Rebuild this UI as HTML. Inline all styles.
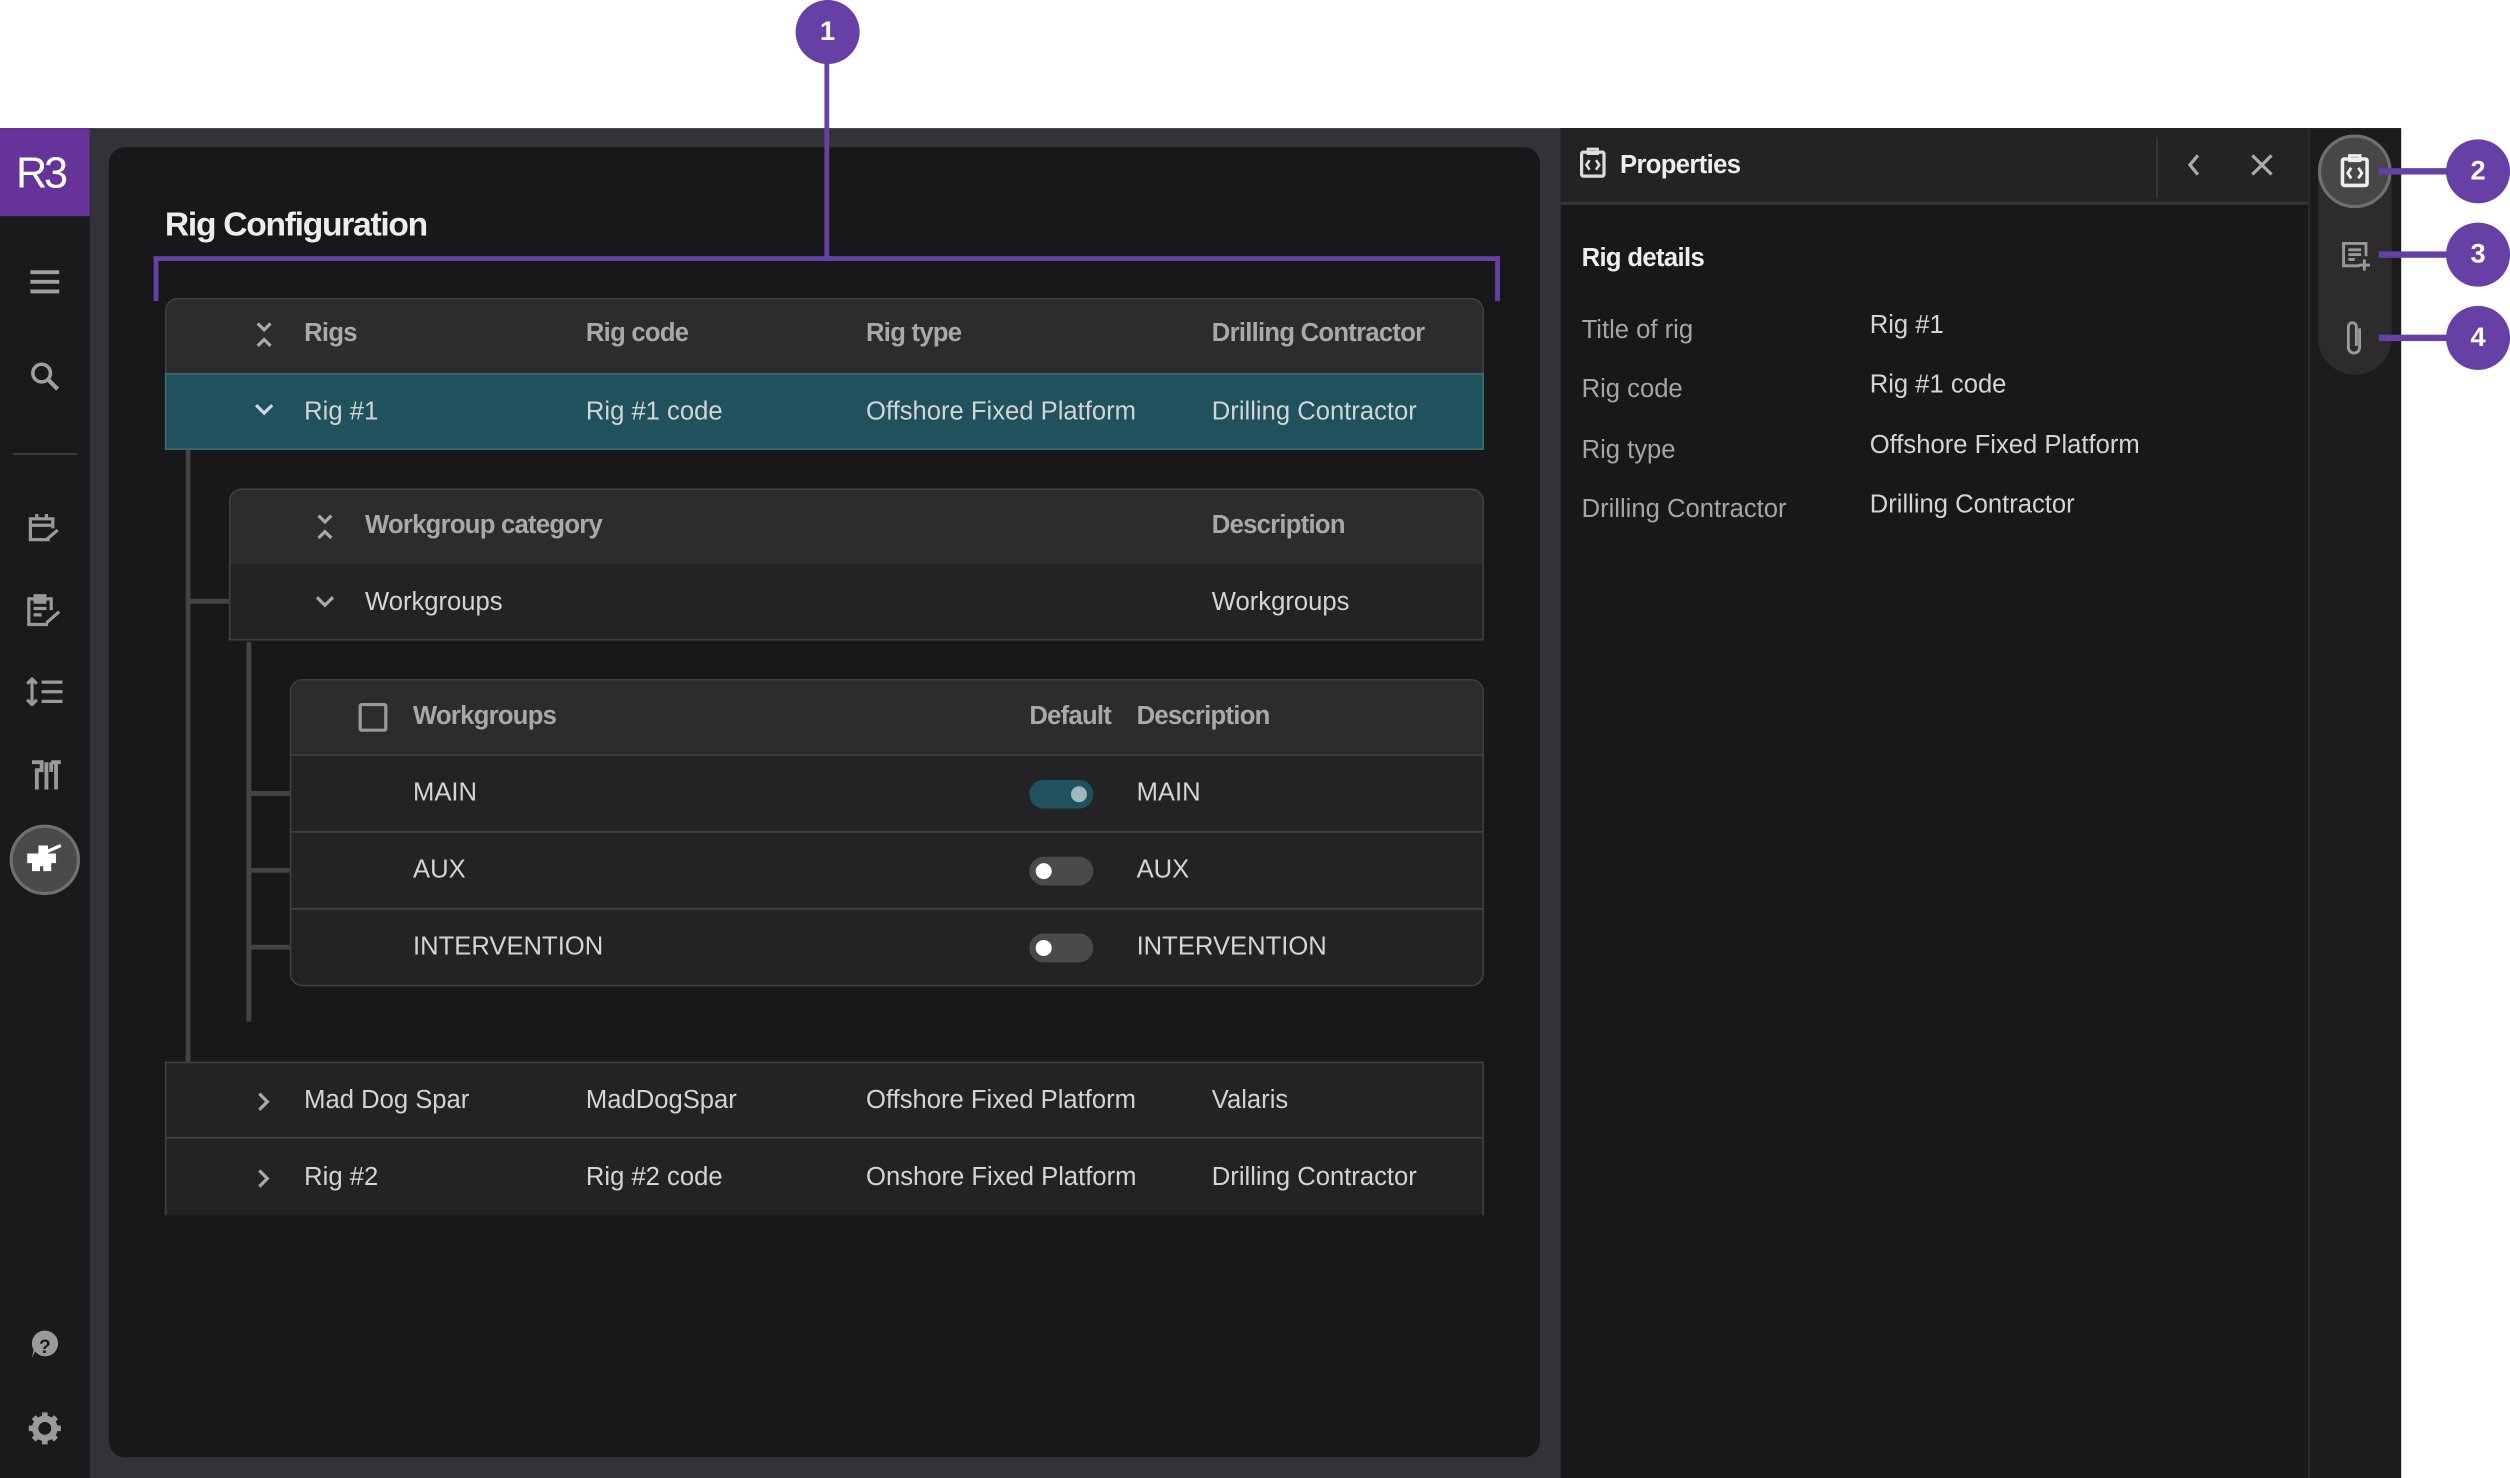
<!DOCTYPE html>
<html><head><meta charset="utf-8"><style>
html,body{margin:0;padding:0;background:#fff;width:2510px;height:1478px;overflow:hidden}
#s{position:absolute;left:0;top:0;width:1568px;height:923px;transform:scale(1.6008,1.6013);transform-origin:0 0;font-family:"Liberation Sans",sans-serif;font-size:16px;color:#d4d4d4}
.a{position:absolute}
.t{position:absolute;white-space:nowrap;line-height:20px;top:0}
.h{color:#a9a9a9;font-weight:bold;letter-spacing:-0.45px}
.row{position:absolute;border-bottom:1px solid #45454a}
.ann{position:absolute;width:40px;height:40px;border-radius:50%;background:#6740a6;color:#fff;font-weight:bold;font-size:17px;text-align:center;line-height:40px}
.pl{position:absolute;background:#6740a6}
svg{position:absolute}
.tg{position:absolute;width:40px;height:18px;border-radius:9px;background:#4a4a4d}
.tg i{position:absolute;left:4px;top:4px;width:10px;height:10px;border-radius:50%;background:#fff}
</style></head><body><div id="s">
<div class="a" style="left:0;top:80px;width:1499px;height:843px;background:#333236"></div>
<div class="a" style="left:0;top:80px;width:56px;height:843px;background:#1a1a1c"></div>
<div class="a" style="left:0;top:80px;width:56px;height:55px;background:#66339a"></div>
<div class="t" style="left:10px;top:93px;font-size:27px;line-height:30px;color:#fff;letter-spacing:-2px">R3</div>
<svg style="left:18px;top:168px" width="20" height="16" viewBox="0 0 20 16"><path d="M1 2h18M1 8h18M1 14h18" stroke="#a0a0a0" stroke-width="2.4"/></svg>
<svg style="left:18px;top:225px" width="20" height="20" viewBox="0 0 20 20"><circle cx="8" cy="8" r="5.5" fill="none" stroke="#a0a0a0" stroke-width="2.2"/><path d="M12 12l6 6" stroke="#a0a0a0" stroke-width="2.6"/></svg>
<div class="a" style="left:8px;top:283px;width:40px;height:1px;background:#444"></div>
<svg style="left:17px;top:320px" width="22" height="20" viewBox="0 0 22 20"><path d="M14 17H2V4h14v6M2 8h14M6 1v4M12 1v4M12 17l7-6" stroke="#9a9a9a" stroke-width="2" fill="none"/></svg>
<svg style="left:16px;top:370px" width="24" height="22" viewBox="0 0 24 22"><path d="M14 20H2V4h14v7M6 2h6v4H6zM5 10h8M5 14h5M13 19l8-7" stroke="#9a9a9a" stroke-width="2" fill="none"/></svg>
<svg style="left:16px;top:423px" width="24" height="18" viewBox="0 0 24 18"><path d="M4 1v16M1 4l3-3 3 3M1 14l3 3 3-3M10 3h13M10 9h13M10 15h13" stroke="#9a9a9a" stroke-width="2" fill="none"/></svg>
<svg style="left:18px;top:474px" width="22" height="20" viewBox="0 0 22 20"><path d="M2 2h6v5H5v12M11 2v17M14 2h6M17 2v17M14 2v6" stroke="#9a9a9a" stroke-width="2.4" fill="none"/></svg>
<div class="a" style="left:6px;top:515px;width:40px;height:40px;border-radius:50%;background:#4a4a4c;border:2px solid #707070"></div>
<svg style="left:16px;top:525px" width="24" height="20" viewBox="0 0 24 20"><path d="M2 9h16v4h-3v5h-3v-3H8v3H5v-5H2zM9 4h4v5H9zM13 7l9-4" stroke="#fff" stroke-width="2" fill="#fff"/></svg>
<svg style="left:18px;top:830px" width="20" height="20" viewBox="0 0 20 20"><path d="M10 1a8 8 0 1 1-6 13l-2 4 1-5A8 8 0 0 1 10 1z" fill="#9a9a9a"/><text x="10" y="15" font-size="12" font-weight="bold" text-anchor="middle" fill="#1a1a1c" font-family="Liberation Sans">?</text></svg>
<svg style="left:17px;top:881px" width="22" height="22" viewBox="0 0 22 22"><circle cx="11" cy="11" r="6" fill="none" stroke="#9a9a9a" stroke-width="4"/><path d="M11 1v5M11 16v5M1 11h5M16 11h5M4 4l3 3M15 15l3 3M4 18l3-3M15 7l3-3" stroke="#9a9a9a" stroke-width="3.5"/></svg>
<div class="a" style="left:68px;top:92px;width:894px;height:818px;background:#18181a;border-radius:10px"></div>
<div class="t" style="left:103px;top:129px;font-size:21px;line-height:24px;font-weight:bold;color:#ededed;letter-spacing:-0.8px">Rig Configuration</div>
<div class="row" style="left:103px;top:186px;width:822px;height:46px;background:#2c2c2e;border:1px solid #404044;border-radius:8px 8px 0 0"></div>
<svg style="left:159px;top:200px" width="12" height="18" viewBox="0 0 12 18"><path d="M2 2l4 4 4-4M2 16l4-4 4 4" stroke="#a9a9a9" stroke-width="2" fill="none"/></svg>
<div class="t h" style="left:190px;top:199px">Rigs</div>
<div class="t h" style="left:366px;top:199px">Rig code</div>
<div class="t h" style="left:541px;top:199px">Rig type</div>
<div class="t h" style="left:757px;top:199px">Drilling Contractor</div>
<div class="row" style="left:103px;top:233px;width:822px;height:46px;background:#1f525c;border:1px solid #3f6b74"></div>
<svg style="left:158px;top:251px" width="14" height="10" viewBox="0 0 14 10"><path d="M2 2l5 5 5-5" stroke="#cfd8da" stroke-width="2" fill="none"/></svg>
<div class="t" style="left:190px;top:248px">Rig #1</div>
<div class="t" style="left:366px;top:248px">Rig #1 code</div>
<div class="t" style="left:541px;top:248px">Offshore Fixed Platform</div>
<div class="t" style="left:757px;top:248px">Drilling Contractor</div>
<div class="a" style="left:116px;top:281px;width:3px;height:382px;background:#444447"></div>
<div class="a" style="left:116px;top:374px;width:27px;height:3px;background:#444447"></div>
<div class="row" style="left:143px;top:305px;width:782px;height:46px;background:#2c2c2e;border:1px solid #404044;border-radius:8px 8px 0 0"></div>
<svg style="left:197px;top:320px" width="12" height="18" viewBox="0 0 12 18"><path d="M2 2l4 4 4-4M2 16l4-4 4 4" stroke="#a9a9a9" stroke-width="2" fill="none"/></svg>
<div class="t h" style="left:228px;top:319px">Workgroup category</div>
<div class="t h" style="left:757px;top:319px">Description</div>
<div class="row" style="left:143px;top:352px;width:782px;height:47px;background:#232325;border:1px solid #404044;border-top:0"></div>
<svg style="left:196px;top:371px" width="14" height="10" viewBox="0 0 14 10"><path d="M2 2l5 5 5-5" stroke="#a9a9a9" stroke-width="2" fill="none"/></svg>
<div class="t" style="left:228px;top:367px">Workgroups</div>
<div class="t" style="left:757px;top:367px">Workgroups</div>
<div class="a" style="left:154px;top:401px;width:3px;height:237px;background:#444447"></div>
<div class="a" style="left:154px;top:494px;width:27px;height:3px;background:#444447"></div>
<div class="a" style="left:154px;top:542px;width:27px;height:3px;background:#444447"></div>
<div class="a" style="left:154px;top:590px;width:27px;height:3px;background:#444447"></div>
<div class="a" style="left:181px;top:424px;width:744px;height:190px;background:#232325;border:1px solid #404044;border-radius:8px"></div>
<div class="a" style="left:182px;top:425px;width:744px;height:46px;background:#2c2c2e;border-radius:8px 8px 0 0;border-bottom:1px solid #45454a"></div>
<div class="a" style="left:182px;top:519px;width:744px;height:1px;background:#45454a"></div>
<div class="a" style="left:182px;top:567px;width:744px;height:1px;background:#45454a"></div>
<div class="a" style="left:224px;top:439px;width:14px;height:14px;border:2px solid #9a9a9a;border-radius:2px"></div>
<div class="t h" style="left:258px;top:438px">Workgroups</div>
<div class="t h" style="left:643px;top:438px">Default</div>
<div class="t h" style="left:710px;top:438px">Description</div>
<div class="t" style="left:258px;top:486px">MAIN</div>
<div class="tg" style="left:643px;top:487px;background:#1f525c"><i style="left:26px;background:#9fb8bd"></i></div>
<div class="t" style="left:710px;top:486px">MAIN</div>
<div class="t" style="left:258px;top:534px">AUX</div>
<div class="tg" style="left:643px;top:535px"><i></i></div>
<div class="t" style="left:710px;top:534px">AUX</div>
<div class="t" style="left:258px;top:582px">INTERVENTION</div>
<div class="tg" style="left:643px;top:583px"><i></i></div>
<div class="t" style="left:710px;top:582px">INTERVENTION</div>
<div class="a" style="left:103px;top:663px;width:822px;height:95px;background:#232325;border:1px solid #404044;border-bottom:0"></div>
<div class="a" style="left:104px;top:710px;width:822px;height:1px;background:#45454a"></div>
<svg style="left:160px;top:681px" width="10" height="14" viewBox="0 0 10 14"><path d="M2 2l5 5-5 5" stroke="#a9a9a9" stroke-width="2" fill="none"/></svg>
<div class="t" style="left:190px;top:678px">Mad Dog Spar</div>
<div class="t" style="left:366px;top:678px">MadDogSpar</div>
<div class="t" style="left:541px;top:678px">Offshore Fixed Platform</div>
<div class="t" style="left:757px;top:678px">Valaris</div>
<svg style="left:160px;top:729px" width="10" height="14" viewBox="0 0 10 14"><path d="M2 2l5 5-5 5" stroke="#a9a9a9" stroke-width="2" fill="none"/></svg>
<div class="t" style="left:190px;top:726px">Rig #2</div>
<div class="t" style="left:366px;top:726px">Rig #2 code</div>
<div class="t" style="left:541px;top:726px">Onshore Fixed Platform</div>
<div class="t" style="left:757px;top:726px">Drilling Contractor</div>
<div class="a" style="left:975px;top:80px;width:467px;height:843px;background:#18181a"></div>
<div class="a" style="left:975px;top:80px;width:467px;height:46px;background:#232325;border-bottom:2px solid #333236"></div>
<div class="a" style="left:1347px;top:86px;width:1px;height:38px;background:#3a3a3d"></div>
<svg style="left:986px;top:92px" width="18" height="20" viewBox="0 0 18 20"><rect x="2" y="3" width="14" height="15" rx="1" fill="none" stroke="#ddd" stroke-width="2"/><path d="M6 1h6v3H6zM7 8l-2 3 2 3M11 8l2 3-2 3" stroke="#ddd" stroke-width="1.6" fill="none"/></svg>
<div class="t" style="left:1012px;top:94px;font-weight:bold;color:#eee;letter-spacing:-0.4px">Properties</div>
<svg style="left:1366px;top:96px" width="10" height="14" viewBox="0 0 10 14"><path d="M7 1L2 7l5 6" stroke="#aaa" stroke-width="2" fill="none"/></svg>
<svg style="left:1406px;top:96px" width="14" height="14" viewBox="0 0 14 14"><path d="M1 1l12 12M13 1L1 13" stroke="#aaa" stroke-width="2"/></svg>
<div class="t" style="left:988px;top:152px;font-weight:bold;color:#eee;letter-spacing:-0.4px">Rig details</div>
<div class="t" style="left:988px;top:197px;color:#a5a5a5">Title of rig</div>
<div class="t" style="left:988px;top:234px;color:#a5a5a5">Rig code</div>
<div class="t" style="left:988px;top:272px;color:#a5a5a5">Rig type</div>
<div class="t" style="left:988px;top:309px;color:#a5a5a5">Drilling Contractor</div>
<div class="t" style="left:1168px;top:194px">Rig #1</div>
<div class="t" style="left:1168px;top:231px">Rig #1 code</div>
<div class="t" style="left:1168px;top:269px">Offshore Fixed Platform</div>
<div class="t" style="left:1168px;top:306px">Drilling Contractor</div>
<div class="a" style="left:1442px;top:80px;width:57px;height:843px;background:#1c1c1e;border-left:1px solid #2e2e31"></div>
<div class="a" style="left:1448px;top:85px;width:46px;height:149px;background:#2c2c2e;border-radius:23px"></div>
<div class="a" style="left:1448px;top:84px;width:42px;height:42px;border-radius:50%;background:#47474a;border:2px solid #6f6f72"></div>
<svg style="left:1461px;top:96px" width="20" height="22" viewBox="0 0 18 20"><rect x="2" y="3" width="14" height="15" rx="1" fill="none" stroke="#eee" stroke-width="2"/><path d="M6 1h6v3H6zM7 8l-2 3 2 3M11 8l2 3-2 3" stroke="#eee" stroke-width="1.6" fill="none"/></svg>
<svg style="left:1462px;top:150px" width="20" height="20" viewBox="0 0 20 20"><path d="M12 16H2V2h14v8M5 6h8M5 9h8M5 12h4M15 12v7M11.5 15.5h7" stroke="#999" stroke-width="1.8" fill="none"/></svg>
<svg style="left:1465px;top:199px" width="12" height="24" viewBox="0 0 12 24"><path d="M9 6v12a3.5 3.5 0 0 1-7 0V5a2.5 2.5 0 0 1 5 0v12" stroke="#999" stroke-width="1.8" fill="none"/></svg>
<div class="pl" style="left:515px;top:30px;width:3px;height:131px"></div>
<div class="pl" style="left:96px;top:160px;width:841px;height:3px"></div>
<div class="pl" style="left:96px;top:160px;width:3px;height:28px"></div>
<div class="pl" style="left:934px;top:160px;width:3px;height:28px"></div>
<div class="ann" style="left:497px;top:0">1</div>
<div class="pl" style="left:1486px;top:105px;width:44px;height:4px"></div>
<div class="pl" style="left:1486px;top:157px;width:44px;height:4px"></div>
<div class="pl" style="left:1486px;top:209px;width:44px;height:4px"></div>
<div class="ann" style="left:1528px;top:87px">2</div>
<div class="ann" style="left:1528px;top:139px">3</div>
<div class="ann" style="left:1528px;top:191px">4</div>
</div></body></html>
